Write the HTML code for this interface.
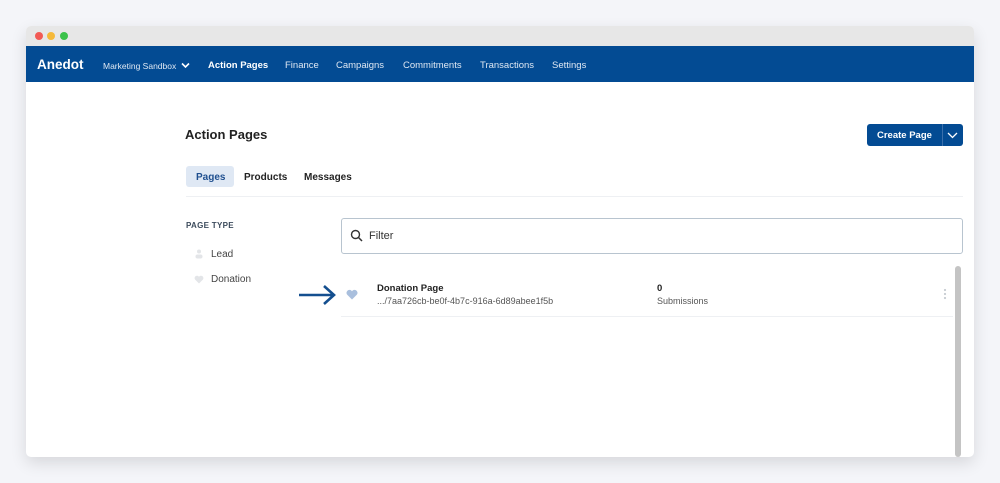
<!DOCTYPE html><html><head><style>
*{margin:0;padding:0;box-sizing:border-box}
body{width:1000px;height:483px;background:#f4f5f9;font-family:"Liberation Sans",sans-serif;position:relative;overflow:hidden}
.win{position:absolute;left:26px;top:26px;width:948px;height:431px;background:#fff;border-radius:5px;overflow:hidden;box-shadow:0 6px 16px rgba(0,0,0,.12)}
.tb{height:20px;background:#e7e7e7;position:relative}
.d{position:absolute;top:6px;width:8px;height:8px;border-radius:50%}
.nav{height:36px;background:#034b93;position:relative;color:#fff}
.nav span{position:absolute;top:14px;font-size:9.5px;color:#dfe8f3}
.a{position:absolute;font-size:10px;color:#222}
</style></head><body>
<div class="win">
<div class="tb"><div class="d" style="left:9px;background:#f25a55"></div><div class="d" style="left:21px;background:#f5b93a"></div><div class="d" style="left:34px;background:#3bc24a"></div></div>
<div class="nav">
<span style="left:11px;top:11px;font-size:13.5px;font-weight:bold;color:#fff">Anedot</span>
<span style="left:77px;font-size:8.5px;top:15px">Marketing Sandbox</span>
<svg style="position:absolute;left:155px;top:16px" width="9" height="7"><path d="M1 1.5L4.5 5L8 1.5" stroke="#fff" stroke-width="1.6" fill="none"/></svg>
<span style="left:182px;font-weight:bold;color:#fff">Action Pages</span>
<span style="left:259px">Finance</span>
<span style="left:310px">Campaigns</span>
<span style="left:377px">Commitments</span>
<span style="left:454px">Transactions</span>
<span style="left:526px">Settings</span>
</div>
</div>
<div class="a" style="left:185px;top:127px;font-size:13px;font-weight:bold">Action Pages</div>
<div style="position:absolute;left:867px;top:124px;width:96px;height:22px;background:#034b93;border-radius:3px;color:#fff;font-size:9.5px;font-weight:bold;line-height:22px;padding-left:10px;padding-top:1px">Create Page
<div style="position:absolute;left:75px;top:0;width:1px;height:22px;background:#3a6fab"></div>
<svg style="position:absolute;left:80px;top:8px" width="11" height="7"><path d="M1 1L5.5 5.5L10 1" stroke="#fff" stroke-width="1.3" fill="none"/></svg></div>
<div style="position:absolute;left:186px;top:166px;width:48px;height:21px;background:#dfe8f4;border-radius:3px"></div>
<div class="a" style="left:196px;top:172px;font-weight:bold;color:#1f4f8f">Pages</div>
<div class="a" style="left:244px;top:172px;font-weight:bold">Products</div>
<div class="a" style="left:304px;top:172px;font-weight:bold">Messages</div>
<div style="position:absolute;left:186px;top:196px;width:777px;height:1px;background:#eef0f3"></div>
<div class="a" style="left:186px;top:221px;font-size:8px;font-weight:bold;color:#3c4b5c;letter-spacing:.3px">PAGE TYPE</div>
<svg style="position:absolute;left:195px;top:249px" width="8" height="10"><circle cx="4" cy="2.5" r="2" fill="#e3e5e8"/><rect x="0.5" y="5.5" width="7" height="4" rx="2" fill="#e3e5e8"/></svg>
<div class="a" style="left:211px;top:249px;color:#444">Lead</div>
<svg style="position:absolute;left:194px;top:275px" width="10" height="9"><path d="M5 8.5L1 4.5A2.2 2.2 0 0 1 5 1.8A2.2 2.2 0 0 1 9 4.5Z" fill="#e3e5e8"/></svg>
<div class="a" style="left:211px;top:274px;color:#444">Donation</div>
<div style="position:absolute;left:341px;top:218px;width:622px;height:36px;border:1px solid #b8c4cf;border-radius:3px"></div>
<svg style="position:absolute;left:350px;top:229px" width="13" height="13"><circle cx="5.5" cy="5.5" r="4" stroke="#333" stroke-width="1.4" fill="none"/><path d="M8.5 8.5L12 12" stroke="#333" stroke-width="1.5"/></svg>
<div class="a" style="left:369px;top:230px;font-size:11px;color:#333">Filter</div>
<svg style="position:absolute;left:297px;top:284px" width="40" height="22"><path d="M2 11H36M27 2L37 11L27 20" stroke="#144f8f" stroke-width="2.6" fill="none"/></svg>
<svg style="position:absolute;left:346px;top:289px" width="12" height="11"><path d="M6 10.5L1 5.5A2.7 2.7 0 0 1 6 2.2A2.7 2.7 0 0 1 11 5.5Z" fill="#a9bfdd"/></svg>
<div class="a" style="left:377px;top:283px;font-size:9.5px;font-weight:bold">Donation Page</div>
<div class="a" style="left:377px;top:296px;font-size:9px;color:#555">.../7aa726cb-be0f-4b7c-916a-6d89abee1f5b</div>
<div class="a" style="left:657px;top:283px;font-size:9.5px;font-weight:bold">0</div>
<div class="a" style="left:657px;top:296px;font-size:9px;color:#555">Submissions</div>
<svg style="position:absolute;left:943px;top:288px" width="4" height="12"><circle cx="2" cy="2" r="1.1" fill="#c7ccd2"/><circle cx="2" cy="6" r="1.1" fill="#c7ccd2"/><circle cx="2" cy="10" r="1.1" fill="#c7ccd2"/></svg>
<div style="position:absolute;left:341px;top:316px;width:612px;height:1px;background:#eef0f3"></div>
<div style="position:absolute;left:955px;top:266px;width:6px;height:191px;background:#c4c4c4;border-radius:3px"></div>
</body></html>
